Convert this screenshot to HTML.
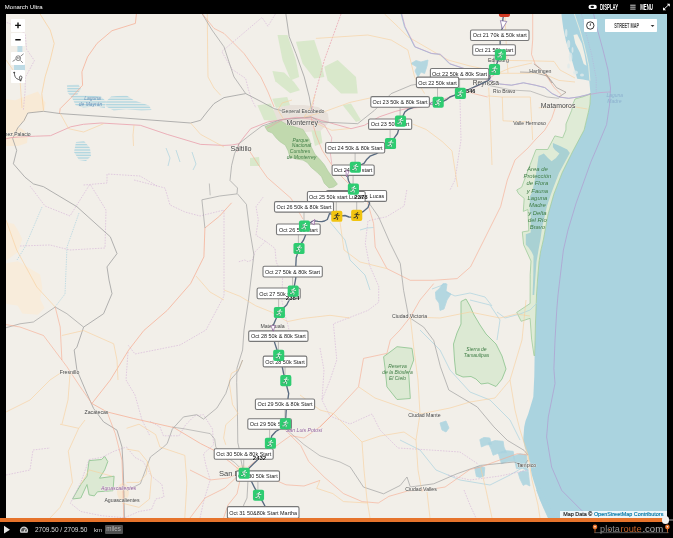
<!DOCTYPE html>
<html><head><meta charset="utf-8"><title>Monarch Ultra</title>
<style>
html,body{margin:0;padding:0;background:#000;}
body{width:673px;height:538px;overflow:hidden;position:relative;font-family:"Liberation Sans",sans-serif;}
#wrap{position:absolute;left:0;top:0;width:673px;height:538px;will-change:transform;}
#title{position:absolute;left:4.8px;top:3.4px;font-size:6px;line-height:8px;color:#fff;white-space:nowrap;}
#map{position:absolute;left:5.7px;top:14.1px;width:661.4px;height:503.5px;background:#f2efe9;overflow:hidden;}
#map svg{position:absolute;left:-5.7px;top:-14.1px;font-family:"Liberation Sans",sans-serif;}
.lb{position:absolute;box-sizing:border-box;background:#fff;border:.8px solid #6e6e6e;border-radius:1.6px;font-size:5.45px;color:#222;white-space:nowrap;text-align:center;box-shadow:0 0 .8px rgba(0,0,0,.4);overflow:hidden;}
.lt{font-size:5.47px;fill:#1a1a1a;}
.btn{position:absolute;background:#fff;box-sizing:border-box;border-radius:.8px;}
#attr{position:absolute;left:554.4px;top:496.8px;width:107px;height:6.7px;background:rgba(255,255,255,.8);font-size:5.45px;line-height:6.9px;color:#222;text-align:left;padding-left:3.2px;box-sizing:border-box;white-space:nowrap;}
#attr{-webkit-text-stroke:.15px #222;}
#attr b{font-weight:normal;color:#0078a8;-webkit-text-stroke:.15px #0078a8;}
#bar{position:absolute;left:0;top:517.9px;width:664px;height:4.1px;background:#e6732b;}
#bar2{position:absolute;left:664px;top:518.9px;width:9px;height:2.2px;background:#555;}
#knob{position:absolute;left:661.6px;top:516.1px;width:7.6px;height:7.6px;border-radius:50%;background:#f2f2f2;}
#bot{position:absolute;left:0;top:521px;width:673px;height:17px;color:#dcdcdc;font-size:6.5px;}
#bot span{position:absolute;white-space:nowrap;}
</style></head><body>
<div id="wrap">
<div id="title">Monarch Ultra</div>
<svg style="position:absolute;left:0;top:0" width="673" height="14" viewBox="0 0 673 14">
<rect x="588.5" y="4.7" width="8.3" height="4.4" rx="2.2" fill="#fff"/><ellipse cx="592.3" cy="6.9" rx="1.8" ry="1.05" fill="#111"/>
<g fill="#d0d0d0"><rect x="630.2" y="4.7" width="5.4" height="1"/><rect x="630.2" y="6.65" width="5.4" height="1"/><rect x="630.2" y="8.6" width="5.4" height="1"/></g>
<g stroke="#fff" stroke-width=".9" fill="#fff"><path d="M663.8 9.4 L669 4.4" fill="none"/><path d="M666.8 3.8 L669.8 3.8 L669.8 6.8 Z" stroke="none"/><path d="M663 7.2 L663 10.2 L666 10.2 Z" stroke="none"/></g>
<text x="600" y="9.6" font-family="Liberation Sans, sans-serif" font-size="8.2" font-weight="bold" fill="#fff" textLength="18" lengthAdjust="spacingAndGlyphs">DISPLAY</text>
<text x="640.2" y="9.6" font-family="Liberation Sans, sans-serif" font-size="8.2" font-weight="bold" fill="#fff" textLength="12.8" lengthAdjust="spacingAndGlyphs">MENU</text>
</svg>
<div id="map">
<svg width="673" height="538" viewBox="0 0 673 538">
<rect x="0" y="0" width="673" height="538" fill="#f2efe9"/>
<ellipse cx="242" cy="472" rx="7" ry="7" fill="#f8e4c8" opacity=".75"/>
<ellipse cx="123" cy="492" rx="6" ry="9" fill="#f8e4c8" opacity=".75"/>
<ellipse cx="528" cy="455" rx="4" ry="7" fill="#f8e4c8" opacity=".75"/>
<polygon points="268,118 275,110 288,106 304,106 318,108 327,114 328,122 320,130 306,131 296,127 284,123 272,124" fill="#e8e1da" stroke="#e8e1da" stroke-width="2" stroke-linejoin="round"/>
<polygon points="5,99 15.2,100.3 27.8,95.3 37.9,91.5 45.5,102.8 44.2,111.7 27.8,113 25.3,120.5 17.7,126.8 22,129 28,134 27,143 18,146 5,146" fill="#f8ead6"/>
<polygon points="5,263.4 17.8,261.2 29,267.9 40.1,274.6 42.4,288 40.1,299.1 44.6,308 37.9,314.7 22.3,313.6 17.8,305.8 5,303.6" fill="#f8ecdb"/>
<polygon points="5,222 14,224 17.8,230 22.3,238.9 17.8,252.3 5,261.2" fill="#f8ecdb"/>
<polygon points="272.4,70.9 284.2,72.4 294,82 300,90.2 290.2,93.2 281,86 275.3,81.3" fill="#d9e8cb"/>
<polygon points="272.3,98.7 287.2,97 290,105 276,108" fill="#d9e8cb"/>
<polygon points="311.3,130.3 320.6,131 322.5,143 315,146" fill="#d9e8cb"/>
<polygon points="250,158 259,157 260,166 250,166" fill="#d9e8cb"/>
<polygon points="277.5,35 287.5,35 295.9,60 299.2,76.9 290.9,80.2 282.5,60" fill="#d9e8cb"/>
<polygon points="295.9,41.8 314.3,40 321,60 324.3,76.9 314.3,78.5 302.6,63.5" fill="#d9e8cb"/>
<polygon points="324.3,66.8 337.7,60 356,76.9 357.7,93.6 341,93.6 327.6,80.2" fill="#d9e8cb"/>
<polygon points="342.7,105.3 351,103.6 361,120.3 356,122" fill="#d9e8cb"/>
<polygon points="257.4,105.3 270.8,103.6 277.5,120.3 264.1,120.3" fill="#d9e8cb"/>
<polygon points="561.4,14 562.4,22 563.3,28.6 566,41.6 569.8,52.8 573.5,65.8 577.2,78.8 583,79.6 589.3,80.7 590.4,93 590,104 588.4,112 584.1,130 579,138 572.4,152 566,164 562,173 557,186 553.9,194 550,206 547.9,215 545,228 543.5,239 541.5,248 540.5,252 539,262 537.5,280 536.5,295 536,309 535.4,325 535.1,340 534.6,356 534.4,370 534.3,376 533.3,397 530,408 528.2,414 525.5,421 524.2,427 523.2,440 525,448 528.2,455 530,464 531.6,474 534,482 536.6,490 540,500 543.3,507 548.3,518 667,518 667,14" fill="#aad3df"/>
<polyline points="574.4,14 577.4,23 580,30.5 583.7,43.5 586.4,55 588.7,65.8 589.9,80.7" fill="none" stroke="#e6ecdf" stroke-width=".9"/>
<polygon points="573.5,35 577.2,34.2 581.9,43.5 584.7,54.7 586.5,65.8 583.7,64 580,52.8 575.3,43.5" fill="#f0efe6"/>
<ellipse cx="568.6" cy="44" rx="1.6" ry="4" fill="#dfeaea" opacity=".8"/>
<ellipse cx="570.6" cy="57" rx="1.8" ry="4.5" fill="#dfeaea" opacity=".8"/>
<ellipse cx="568.6" cy="66" rx="1.4" ry="2.6" fill="#dfeaea" opacity=".8"/>
<ellipse cx="575.5" cy="72.5" rx="2.4" ry="2" fill="#dfeaea" opacity=".8"/>
<ellipse cx="582" cy="75" rx="2" ry="1.6" fill="#dfeaea" opacity=".8"/>
<ellipse cx="566.2" cy="33" rx="1.2" ry="4" fill="#dfeaea" opacity=".8"/>
<ellipse cx="572.5" cy="50" rx="1" ry="3" fill="#dfeaea" opacity=".8"/>
<polyline points="581.5,14 585.1,30 591.6,54.2 596.2,78.3 596.2,92.3" fill="none" stroke="#b9a8d6" stroke-width=".5" stroke-dasharray="1.2 1.2"/>
<rect x="17.4" y="44" width="5" height="9" fill="#bedbe5"/><rect x="14" y="62" width="11" height="10" fill="#bedbe5"/>
<polygon points="590.4,94 583,96.8 575,99 573,104 571.7,110.3 566,124 565.9,130 562.7,137.8 554.9,135.9 547.7,149.5 536,149.5 529.5,166.4 524,181 521.7,187.2 516.7,190 518.6,193.7 524.2,198.4 523.3,211.4 527.9,209.5 528.8,230.9 522.3,231.9 523.6,244.7 531,261 530.2,274.4 530.1,303.5 516.7,312.4 521.2,321.3 530.1,318.3 531.6,339.1 534,355.4 534.6,356 535.1,340 535.4,325 536,309 536.5,295 537.5,280 539,262 540.5,252 543.5,239 547.9,215 553.9,194 562,173 572.4,152 584.1,130 588.4,112 590,104 590.5,93" fill="#dfebd6" stroke="#9fcc9c" stroke-width=".8" stroke-linejoin="round"/>
<polygon points="552.9,143 560,146 567.2,149.5 569.8,153 565.5,161 559,173 554,186 551,194 547,206 545,215 542,228 540.5,239 538.5,250 536.5,262 535.2,280 534.2,295 532.6,295 533.3,275 533.5,256 531.7,252.1 528.8,247.7 525.8,244.7 525.8,234.3 530.7,232.6 530.7,215 529.8,211 529.8,196.5 532.1,192.4 536,174.2 538.6,156 543.8,153.4 548,158 551.6,161.2 556,158 559.4,153.4 555,150 552.9,146.9" fill="#a9d1d3"/>
<polygon points="264.9,126.6 274.2,122.9 280.7,121 287.2,124.7 296.5,127.5 303,129.4 305.8,134 309.5,139.6 311.3,147 315.1,154.5 318.8,158.2 324.3,164.7 328.1,171.2 332.7,177.7 337.4,184.2 333.6,187 329,187.9 324.3,183.3 321.6,176.8 316.9,172.1 311.3,167.5 307.6,162.8 303,160.1 296.5,159.1 290,157.3 288.1,150.8 285.3,145.2 279.7,141.5 276,137.8 272.3,133.1 267.7,131.2" fill="#c1d9ae" stroke="#a9c99a" stroke-width=".6" stroke-linejoin="round"/>
<polygon points="461,301.5 466,299 470,306 473.5,314 480,325 486,334 496,344 502,356 506,369 502,379 496,386.5 488,383 481,384 476,379 471,376.5 463,377 456,374 454.5,360 453.5,344 457,333 461,324" fill="#dce9d3" stroke="#9ccb9c" stroke-width="1" stroke-linejoin="round"/>
<polygon points="383.6,356.7 390,352 397,346.7 412,348.4 413.7,360 408.7,373.4 410.3,398.5 397,399.5 386.9,386.8 385.3,370" fill="#dce9d3" stroke="#9ccb9c" stroke-width="1" stroke-linejoin="round"/>
<polygon points="72.5,499 80.8,484.5 87,476.2 89.1,460.6 101.6,459.5 104.7,456.4 107.8,461.6 104.7,469.9 99.5,478.2 114.1,476.2 113,490.7 97.4,491.8 94.3,495.9 89.1,494.9 87,484.5 80.8,498" fill="#dce9d3" stroke="#9ccb9c" stroke-width="1" stroke-linejoin="round"/>
<polygon points="411,63.5 416,60.5 421,62 428,60 427,66 424.6,73.5 421,72 418,76.9 415,71 417,67" fill="#aad3df" stroke="#aad3df" stroke-width=".8" stroke-linejoin="round" opacity=".85"/>
<polygon points="435.4,292 439,289 443,283.6 447,284 446,291 451,294 447,300 444,309 440,310.4 439,303 436,299" fill="#aad3df" stroke="#aad3df" stroke-width=".8" stroke-linejoin="round" opacity=".85"/>
<polygon points="440,423 446,421 449,428 446,432 442,430" fill="#aad3df" stroke="#aad3df" stroke-width=".8" stroke-linejoin="round" opacity=".85"/>
<polygon points="479.8,439.6 484,437.4 489.8,438 491.5,444.3 486,445 481.4,447" fill="#aad3df" stroke="#aad3df" stroke-width=".8" stroke-linejoin="round" opacity=".85"/>
<polygon points="488.1,443 495,440.6 503.2,441.3 504,447 506.5,452.7 499,453 493.1,455.3 491,449" fill="#aad3df" stroke="#aad3df" stroke-width=".8" stroke-linejoin="round" opacity=".85"/>
<polygon points="498.2,453 505,450.6 513.2,451.3 514.9,461 508,461.4 501.5,463.7" fill="#aad3df" stroke="#aad3df" stroke-width=".8" stroke-linejoin="round" opacity=".85"/>
<polygon points="513.2,456.3 520,453.8 526.6,454.7 527,463 528.2,471 522,468 516.5,468.7 515,462" fill="#aad3df" stroke="#aad3df" stroke-width=".8" stroke-linejoin="round" opacity=".85"/>
<polygon points="474.7,468 479,466.2 484.8,467.4 484.1,476 480,477.4 476.4,476.4" fill="#aad3df" stroke="#aad3df" stroke-width=".8" stroke-linejoin="round" opacity=".85"/>
<polygon points="518.2,473 523,471 528.2,471.4 529.9,486 526,484 523.2,485.4 520,479" fill="#aad3df" stroke="#aad3df" stroke-width=".8" stroke-linejoin="round" opacity=".85"/>
<polygon points="536.6,490 540,488 546,500 552,512 556,518 548.3,518 543.3,507" fill="#aad3df" stroke="#aad3df" stroke-width=".8" stroke-linejoin="round" opacity=".85"/>
<defs><pattern id="hz" width="4" height="1.6" patternUnits="userSpaceOnUse"><rect width="4" height=".8" fill="#aad3df"/></pattern></defs>
<polygon points="66.9,85.2 78.3,83.9 80.8,88.9 77,95.3 85.9,95.3 101,96.5 106.1,101.6 104.8,107.9 96,106.6 83.4,107.4 75.8,105.4 72,97.8 67.7,92.7" fill="url(#hz)"/>
<polygon points="111.1,96.5 126.3,95.3 133.9,100.3 149,105.4 151.6,110 141.5,110.4 126.3,109.2 113.7,110.4 106.1,106.6 106.1,101.6" fill="url(#hz)"/>
<polygon points="76,142 84,141 90,148 91,156 86,161 79,160 74,152" fill="url(#hz)"/>
<polyline points="540,300 530,310 520,314 505,318 497,312" fill="none" stroke="#aad3df" stroke-width=".7"/>
<polyline points="330,222 345,240 350,260 365,275 370,290" fill="none" stroke="#aad3df" stroke-width=".7"/>
<polyline points="360,230 367,228 373.4,227.5" fill="none" stroke="#aad3df" stroke-width=".7"/>
<polyline points="432,289 440,286 446,283.6" fill="none" stroke="#aad3df" stroke-width=".7"/>
<polyline points="446,292 455,296 470,293 485,297 492,306" fill="none" stroke="#aad3df" stroke-width=".7"/>
<polyline points="470,300 490,305 500,320 497,340" fill="none" stroke="#aad3df" stroke-width=".7"/>
<polyline points="420,330 440,350 450,370 470,392 490,400 510,420 520,440" fill="none" stroke="#aad3df" stroke-width=".7"/>
<polyline points="400,440 420,450 436,470 460,480 490,485 510,475 522,468" fill="none" stroke="#aad3df" stroke-width=".7"/>
<polyline points="166,148 170,158 168,166" fill="none" stroke="#aad3df" stroke-width=".7"/>
<polyline points="176,150 180,162" fill="none" stroke="#aad3df" stroke-width=".7"/>
<polyline points="192,152 196,164 193,170" fill="none" stroke="#aad3df" stroke-width=".7"/>
<polyline points="42,207 25,247 17,260" fill="none" stroke="#aad3df" stroke-width=".7" stroke-dasharray="1.4 1"/>
<polyline points="79,213 67,247 65,294 55,307" fill="none" stroke="#aad3df" stroke-width=".7" stroke-dasharray="1.4 1"/>
<polyline points="89.1,459.5 101.6,457.4 114.1,451.2 126.6,447 134.9,457.4 143.2,461.6 151.5,476.2 161.9,484.5 164,497 155.7,499 151.5,509.4 139,511.5 124.5,517.8 101.6,515.7 80.8,511.5 70.4,503.2 80.8,482.4 89.1,459.5" fill="none" stroke="#d3b0d6" stroke-width=".6" stroke-dasharray="1.6 1.2"/>
<polyline points="275.3,14.2 267.9,26.3 262,17.4 221.8,51.6 232.2,69.4 245.6,78.4 248.6,90.2 252,100 256,108" fill="none" stroke="#d3b0d6" stroke-width=".6" stroke-dasharray="1.6 1.2"/>
<polyline points="6.8,22.5 10.4,23.9 20,30 25.2,33.8 26.6,49.3 34.4,60.6 25.2,77.6 25.2,90 23.4,110" fill="none" stroke="#d3b0d6" stroke-width=".6" stroke-dasharray="1.6 1.2"/>
<polyline points="83.6,185 107,183 107,174 140,176 157,186" fill="none" stroke="#d3b0d6" stroke-width=".6" stroke-dasharray="1.6 1.2"/>
<polyline points="30,186 45,206 70,216 90,184" fill="none" stroke="#d3b0d6" stroke-width=".6" stroke-dasharray="1.6 1.2"/>
<polyline points="20,246 50,245 70,250 105,248 106,210 90,184" fill="none" stroke="#d3b0d6" stroke-width=".6" stroke-dasharray="1.6 1.2"/>
<polyline points="134,180 165,188 170,205 185,212 200,216 224,210 224,296 206,330 180,345 135,354 128,345" fill="none" stroke="#d3b0d6" stroke-width=".6" stroke-dasharray="1.6 1.2"/>
<polyline points="128,352 126,380 135,395 142,420 150,436" fill="none" stroke="#d3b0d6" stroke-width=".6" stroke-dasharray="1.6 1.2"/>
<polyline points="6,475 30,470 33,450 50,448" fill="none" stroke="#d3b0d6" stroke-width=".6" stroke-dasharray="1.6 1.2"/>
<polyline points="150,421.3 160,427 163.4,435.8 179,435.8 185.7,424.7 194.6,415.8 203.5,414.7 212.5,429.1 213.6,444.8 203.5,453.7 205.8,464.8 210.2,480 204,500 200,518" fill="none" stroke="#d3b0d6" stroke-width=".6" stroke-dasharray="1.6 1.2"/>
<polyline points="406.8,190 404.1,206 386.7,216.7 368,220.8 365.3,243.5 369.4,264.9 378.7,286.3 378.7,302.3 368,310.4 333.4,323.8 336.8,360 330,380 322,400" fill="none" stroke="#d3b0d6" stroke-width=".6" stroke-dasharray="1.6 1.2"/>
<polyline points="263.1,197.2 256,206.7 258.3,219.8 256,235.3 265.5,241.2 275,248.4 276.2,262 280,270 282.6,277 281.8,300 285,315 287.4,323 289,330" fill="none" stroke="#d3b0d6" stroke-width=".6" stroke-dasharray="1.6 1.2"/>
<polyline points="265.5,241.2 254.8,252 252.4,260 247.9,261.6 244.7,260 238,262" fill="none" stroke="#d3b0d6" stroke-width=".6" stroke-dasharray="1.6 1.2"/>
<polyline points="320,348 324,370 322,400 330,416 350,424 372,414 380,430 398,448 430,450 460,452 478,464" fill="none" stroke="#d3b0d6" stroke-width=".6" stroke-dasharray="1.6 1.2"/>
<polyline points="448,475 470,480 500,476 528,470" fill="none" stroke="#d3b0d6" stroke-width=".6" stroke-dasharray="1.6 1.2"/>
<polyline points="464,490 470,505 476,518" fill="none" stroke="#d3b0d6" stroke-width=".6" stroke-dasharray="1.6 1.2"/>
<polyline points="460,100 461,140 455,180 450,190" fill="none" stroke="#d3b0d6" stroke-width=".6" stroke-dasharray="1.6 1.2"/>
<polyline points="593.6,14 597,28 603,50 608,70 610.5,88 609.5,105 606.6,124.5 596,150 591,161.6 576.1,203.2 568,230 563.4,250 559.8,279.8 558,295 556.8,309.4 555,340 553.9,368.8 555,383.5 548.3,416.9 546.6,437 551.6,467 561.7,490.4 581.7,510.5 590,518" fill="none" stroke="#b09bd0" stroke-width=".7"/>
<polyline points="136.4,14 135.4,23.4 112,30.7 97,43.4 87.6,56.8 81.9,71.9 82.6,85.2 71.9,96.9 60.2,108.6 59.5,113.6" fill="none" stroke="#f7a98e" stroke-width="0.7" stroke-linejoin="round"/>
<polyline points="40.1,14 50.2,30 54.2,43.4 50.2,60.2 45.1,76.9 41.8,93.6 43.5,110.3" fill="none" stroke="#f9cf9a" stroke-width="0.7" stroke-linejoin="round"/>
<polyline points="12.7,138.7 15.2,133 17.7,128 24,120.5 27.8,113 43.5,111.3 60.2,113.6 110.3,117 190.6,123 200.6,120.3 207,112 214,103.6 224,97.6 245.7,93.6 260,101 274.1,108.6 290,113" fill="none" stroke="#a0a0a0" stroke-width="0.8" stroke-linejoin="round"/>
<polyline points="5,139 12,137.5 20.2,136.9 35.4,136.2 50.5,135.7 60,131.5 70.7,126.8 83.4,124.3 101,123 140.4,125.3 167.2,134.4 200.6,144.4 224,145.4 232,145 239,143.7" fill="none" stroke="#ea9fac" stroke-width="0.8" stroke-linejoin="round"/>
<polyline points="60.2,113.6 68.6,128.7 83.6,132 103.6,123.7" fill="none" stroke="#f9cf9a" stroke-width="0.6" stroke-linejoin="round"/>
<polyline points="190.6,123 200.6,134.4 224,147" fill="none" stroke="#f9cf9a" stroke-width="0.6" stroke-linejoin="round"/>
<polyline points="207.3,14 207.6,50 208,76.9 214,88 220.7,95.3" fill="none" stroke="#f9cf9a" stroke-width="0.6" stroke-linejoin="round"/>
<polyline points="202.3,14 212,30 224,46.8 229,62 234,76.9 245.7,93.6" fill="none" stroke="#a0a0a0" stroke-width="0.7" stroke-linejoin="round"/>
<polyline points="202.5,14 214,28.4 224,33.4 244,53.5 260.8,76.9 268,92 274.1,107" fill="none" stroke="#f7a98e" stroke-width="0.6" stroke-linejoin="round"/>
<polyline points="12.7,138.7 16.7,150.4 13.4,163.8 25,177.2 33.4,183.9 43.5,186.7 76.9,206.7 110.3,236.8 117,253.6 107,266.9 109,280 112,293.7 103.6,313.7 83.6,327.1 76.9,347.2 74.2,350 76.9,370 86.9,393.5 93.6,408.5 103.6,421.9 117,430.2 122,447 123,465 123.7,483.7 124.4,518" fill="none" stroke="#a0a0a0" stroke-width="0.8" stroke-linejoin="round"/>
<polyline points="134,125 133,135 133.5,146" fill="none" stroke="#f9cf9a" stroke-width="0.6" stroke-linejoin="round"/>
<polyline points="285.9,14 289.2,36.7 295.9,53.5 304.2,76.9 309.3,96.9 311.6,110.3" fill="none" stroke="#a0a0a0" stroke-width="0.8" stroke-linejoin="round"/>
<polyline points="341,14 324.3,60.2 314.3,96.9 311.6,113.6" fill="none" stroke="#ea9fac" stroke-width="0.7" stroke-linejoin="round" stroke-dasharray="2 1"/>
<polyline points="311,117 287.5,118.7 267.5,122 250.7,128.7 244,137 239,143.7 237,152" fill="none" stroke="#ea9fac" stroke-width="0.8" stroke-linejoin="round"/>
<polyline points="311,117 321,120.3 351,128.7 364.4,125.3 379.4,116.8 395.4,111.4 406.1,108.7 420.8,107.3 438,101.5 460,93 480,85 494,75" fill="none" stroke="#ea9fac" stroke-width="0.8" stroke-linejoin="round"/>
<polyline points="412.8,124.1 426.2,129.5 442.2,141.5 452,150.9 457.7,187" fill="none" stroke="#f9cf9a" stroke-width="0.6" stroke-linejoin="round"/>
<polyline points="311,117 321,122 357.7,123.7 374.5,110.3 391.2,93.6 411.2,85.2 431.3,81.9 450,80 470,78 490,74" fill="none" stroke="#a0a0a0" stroke-width="0.7" stroke-linejoin="round"/>
<polyline points="315.9,38.4 367.8,35 391.2,40 407.9,50 414.6,76.9 424.6,93.6" fill="none" stroke="#f9cf9a" stroke-width="0.6" stroke-linejoin="round"/>
<polyline points="384.5,14 397.9,26.7 407.9,36.7 448,60 470,66 490,70" fill="none" stroke="#f9cf9a" stroke-width="0.6" stroke-linejoin="round"/>
<polyline points="401.2,14 404.5,26.7 409.6,36.7 414.6,46.8 431.3,53.5 440,54.3 449.5,63.8 463.8,68.5 487.6,79.2 499.4,84 511.3,85.2 523.2,82.8 535.1,85.2 544.6,87.6 551.7,93.5 558.9,97 568.4,98.3 577.9,97 587.4,94.7 590.4,93.5" fill="none" stroke="#9cc7d8" stroke-width="0.9" stroke-linejoin="round"/>
<polyline points="401.8,14 405.1,26.7 410.2,36.7 415.2,46.8 431.9,53.5 440.6,54.3 450.1,63.8 464.4,68.5 488.2,79.2 500,84 511.9,85.2 523.8,82.8 535.7,85.2 545.2,87.6 552.3,93.5 559.5,97 569,98.3 578.5,97 588,94.7 600,92.6 610.7,91.9" fill="none" stroke="#c79fcc" stroke-width="0.7" stroke-linejoin="round"/>
<polyline points="311,117 316,135 322,150 335,170 350,185 366.9,200" fill="none" stroke="#f7a98e" stroke-width="0.6" stroke-linejoin="round"/>
<polyline points="239,143.7 250,135 262,126 280,120 311,117" fill="none" stroke="#a0a0a0" stroke-width="0.7" stroke-linejoin="round"/>
<polyline points="303.9,117.3 311.3,106.2 315,95" fill="none" stroke="#f9cf9a" stroke-width="0.6" stroke-linejoin="round"/>
<polyline points="303.9,117.3 324.3,111.7 350,102.4 370,98" fill="none" stroke="#f9cf9a" stroke-width="0.6" stroke-linejoin="round"/>
<polyline points="311.3,121 331.8,130.3 350,128.5" fill="none" stroke="#f9cf9a" stroke-width="0.6" stroke-linejoin="round"/>
<polyline points="266.7,128.5 283.5,119.2 296.5,117.3 311.3,119.2 324.3,124.7 331.8,137.8 330,150.8 331.8,163.8" fill="none" stroke="#ea9fac" stroke-width="0.6" stroke-linejoin="round"/>
<polyline points="283.5,119.2 278,110 282,103 292,100" fill="none" stroke="#f9cf9a" stroke-width="0.6" stroke-linejoin="round"/>
<polyline points="487.6,60.2 520,60.6 554,61.4" fill="none" stroke="#f9cf9a" stroke-width="0.6" stroke-linejoin="round"/>
<polyline points="495.9,73.3 542.2,73.3 558.9,80.4 575,82" fill="none" stroke="#f9cf9a" stroke-width="0.6" stroke-linejoin="round"/>
<polyline points="532.7,14 532.7,40 531.5,54.3 535.1,63.8 544.6,73.3 554.1,87.6 561.3,94.7" fill="none" stroke="#f7a98e" stroke-width="0.6" stroke-linejoin="round"/>
<polyline points="533.9,63.8 544.6,72.1 556.5,87.6 566,92.3 558.9,97" fill="none" stroke="#8f8580" stroke-width="0.6" stroke-linejoin="round"/>
<polyline points="520,72 533.9,72.5 547,76 552,83" fill="none" stroke="#8f8580" stroke-width="0.6" stroke-linejoin="round"/>
<polyline points="487.6,85.2 511.3,90 530.3,91.1 547,97 558.9,98.3" fill="none" stroke="#a0a0a0" stroke-width="0.6" stroke-linejoin="round"/>
<polyline points="488.7,87.6 490,111.3 491.1,140 492,165" fill="none" stroke="#f9cf9a" stroke-width="0.6" stroke-linejoin="round"/>
<polyline points="487.6,95.9 501.8,97 530.3,97 531.5,118.5 532.7,140" fill="none" stroke="#f9cf9a" stroke-width="0.6" stroke-linejoin="round"/>
<polyline points="502.3,97 503,120.8 530.3,122" fill="none" stroke="#f9cf9a" stroke-width="0.6" stroke-linejoin="round"/>
<polyline points="538.7,107.8 573.1,106.6 587.4,109" fill="none" stroke="#f9cf9a" stroke-width="0.6" stroke-linejoin="round"/>
<polyline points="556.5,104.2 551.7,118.5 544.6,130.3 535.1,140 528,148" fill="none" stroke="#f7a98e" stroke-width="0.6" stroke-linejoin="round"/>
<polyline points="454.3,87.6 473.3,93.5 487.6,97" fill="none" stroke="#f7a98e" stroke-width="0.6" stroke-linejoin="round"/>
<polyline points="494,75 510,68 532,63" fill="none" stroke="#f9cf9a" stroke-width="0.6" stroke-linejoin="round"/>
<polyline points="505,14 506,40 507,60 508,73" fill="none" stroke="#f9cf9a" stroke-width="0.6" stroke-linejoin="round"/>
<polyline points="554,61.4 560,70 575,78" fill="none" stroke="#f9cf9a" stroke-width="0.6" stroke-linejoin="round"/>
<polyline points="528,148 515,160 507.3,180 500.6,206.7 483.9,240.2 470.5,266.9 457.1,278.6 433.7,280.3 410.3,280.3 386.9,268.6 375.2,246.9 373.6,223.5 366.9,200" fill="none" stroke="#f7a98e" stroke-width="0.6" stroke-linejoin="round"/>
<polyline points="231.6,202.8 219.7,216 204.9,228 203.9,256.9 190.6,283.6 167.2,310.4 143.8,330.5 128.7,350 110.3,380 91.9,403.5" fill="none" stroke="#f7a98e" stroke-width="0.7" stroke-linejoin="round"/>
<polyline points="239,143.7 234.5,153.8 231.6,165.6 230,180.5 237.5,188 237,193.9 219.7,196 201.9,199.8 204.9,228" fill="none" stroke="#a0a0a0" stroke-width="0.7" stroke-linejoin="round"/>
<polyline points="209.3,183.5 210.2,195.3" fill="none" stroke="#a0a0a0" stroke-width="0.6" stroke-linejoin="round"/>
<polyline points="237.5,193.9 246.4,204.3 249.4,228 253.9,254.7 250.9,280 248.5,300 244,330 242.6,350 237,368 236.7,382.4 237.4,410 237.8,442.6 239,448 241,460 243,470 248,480 247,498 243.7,505 242,518" fill="none" stroke="#a0a0a0" stroke-width="0.7" stroke-linejoin="round"/>
<polyline points="249.4,150.8 258.9,165.6 267.2,177.5 279.1,187.9 291,198.3 302.9,219" fill="none" stroke="#f7a98e" stroke-width="0.6" stroke-linejoin="round"/>
<polyline points="172.3,427 185.7,429.1 210.2,433.6 214.7,439.2 215.8,447 221.4,453.7 234.7,462.5 239.2,467" fill="none" stroke="#a0a0a0" stroke-width="0.6" stroke-linejoin="round"/>
<polyline points="242.6,360 239.2,369 231.4,373.4 229.2,382.3 232.5,404.6 238.1,413.5 225.8,424.7 223.6,438 225.8,444.8" fill="none" stroke="#f9cf9a" stroke-width="0.6" stroke-linejoin="round"/>
<polyline points="286,429 304,444.6 320,455.8 340,462 350.2,467" fill="none" stroke="#a0a0a0" stroke-width="0.6" stroke-linejoin="round"/>
<polyline points="248,467 259.3,458 290.5,435.7 304,438 320,426.8 333.4,413.6" fill="none" stroke="#f7a98e" stroke-width="0.6" stroke-linejoin="round"/>
<polyline points="245.9,473.7 270.4,478 286,484.8 304,486 320,480.4" fill="none" stroke="#f7a98e" stroke-width="0.6" stroke-linejoin="round"/>
<polyline points="241.4,473.7 237,493.8 228,505 223.6,518" fill="none" stroke="#f7a98e" stroke-width="0.6" stroke-linejoin="round"/>
<polyline points="5,328 20,323.8 33.4,322 55.2,307 66.9,313.7 83.6,327.1" fill="none" stroke="#a0a0a0" stroke-width="0.7" stroke-linejoin="round"/>
<polyline points="5,324.4 20,327 43.5,335.5 61.9,360 66.9,366.7 80.2,386.8 91.9,403.5" fill="none" stroke="#f7a98e" stroke-width="0.6" stroke-linejoin="round"/>
<polyline points="55.2,307 60.2,327 61.9,360" fill="none" stroke="#f7a98e" stroke-width="0.6" stroke-linejoin="round"/>
<polyline points="6,220 16.7,250 36.8,287 55.2,307" fill="none" stroke="#f9cf9a" stroke-width="0.6" stroke-linejoin="round"/>
<polyline points="61.9,335.5 83.6,330.5 113.7,343.8 117,360 118,380" fill="none" stroke="#f9cf9a" stroke-width="0.6" stroke-linejoin="round"/>
<polyline points="224,300 210,292 196,276" fill="none" stroke="#f9cf9a" stroke-width="0.6" stroke-linejoin="round"/>
<polyline points="224,290 240,296.3 255.8,305.8 271.6,312.1 287.4,321.6 303.2,318.4 330,315.3 350,318" fill="none" stroke="#f9cf9a" stroke-width="0.6" stroke-linejoin="round"/>
<polyline points="91.9,403.5 107,411.9 133.7,418.5 173.9,427.6 200.6,443.6 214,450.3 230,462 242,472" fill="none" stroke="#f7a98e" stroke-width="0.7" stroke-linejoin="round"/>
<polyline points="107,411.9 115.3,433.6 122,460.3 123,490 123.7,518" fill="none" stroke="#f7a98e" stroke-width="0.6" stroke-linejoin="round"/>
<polyline points="242.6,360 238.1,371.2 230.3,380 225.8,393.5 216.9,408 203.5,419.1 196.8,414.7 183.5,416.9 172.3,429.2 167.2,443.6 163.4,447 150.4,457 140.4,483.7 127,490.4" fill="none" stroke="#a0a0a0" stroke-width="0.7" stroke-linejoin="round"/>
<polyline points="6,412 30,400 50,380 62,372" fill="none" stroke="#f9cf9a" stroke-width="0.6" stroke-linejoin="round"/>
<polyline points="242,472 225,488 205,498 190,518" fill="none" stroke="#f7a98e" stroke-width="0.6" stroke-linejoin="round"/>
<polyline points="242,472 228,478 210,480 190,470" fill="none" stroke="#f7a98e" stroke-width="0.6" stroke-linejoin="round"/>
<polyline points="126.6,449.1 139,451.2 147.4,461.6 146.3,474.1 139,482.4 126.6,482.4" fill="none" stroke="#f9cf9a" stroke-width="0.6" stroke-linejoin="round"/>
<polyline points="60,424.2 78.7,428.3 85,420" fill="none" stroke="#f9cf9a" stroke-width="0.6" stroke-linejoin="round"/>
<polyline points="78.7,428.3 68.3,451.2 72.5,482.4 60,507.4" fill="none" stroke="#f9cf9a" stroke-width="0.6" stroke-linejoin="round"/>
<polyline points="126.6,428.3 139,424.2 155.7,434.6 159.9,447 184.8,455.4 186.9,482.4 184.8,518" fill="none" stroke="#f9cf9a" stroke-width="0.6" stroke-linejoin="round"/>
<polyline points="147.4,461.6 151.5,476.2 149.5,499 139,507.4 122.4,503.2" fill="none" stroke="#f9cf9a" stroke-width="0.6" stroke-linejoin="round"/>
<polyline points="112,476.2 89.1,469.9 80.8,484.5" fill="none" stroke="#f9cf9a" stroke-width="0.6" stroke-linejoin="round"/>
<polyline points="70,374 68,400 62,424" fill="none" stroke="#f9cf9a" stroke-width="0.6" stroke-linejoin="round"/>
<polyline points="60,507.4 50,518" fill="none" stroke="#f9cf9a" stroke-width="0.6" stroke-linejoin="round"/>
<polyline points="366.9,200 378.6,216.8 390.3,243.5 400.3,263.6 403.6,290.3 408.7,317.1 423.7,327.1 433.7,340.5 440.4,366.7 448.8,390 477.2,406.9 493.9,426.9 507.3,440.3 524,450.3 528,455" fill="none" stroke="#a0a0a0" stroke-width="0.7" stroke-linejoin="round"/>
<polyline points="433.7,283.6 420,300 410.3,317" fill="none" stroke="#f7a98e" stroke-width="0.6" stroke-linejoin="round"/>
<polyline points="410.3,317 400,330 390.3,340 386.9,353.4 363.5,358.4 358.5,386.8 333.4,413.6 320,426.8" fill="none" stroke="#f7a98e" stroke-width="0.6" stroke-linejoin="round"/>
<polyline points="350.2,467 363.5,487.1 383.6,493.8 400.3,485.4 407,477 410.3,487 433.7,483.8 457.1,473.7 480.5,465.4 514,462 524,465.4 528,460" fill="none" stroke="#a0a0a0" stroke-width="0.7" stroke-linejoin="round"/>
<polyline points="285.4,430 290,434.8 300.7,445.5 308.7,461.5 324.8,477.6 343.5,493.6 362.2,501.6 378.3,503 389,496.3 407.7,491 429,489.6 445.1,487 470,469.5 480.5,467 517.3,453.7 528,455" fill="none" stroke="#f7a98e" stroke-width="0.6" stroke-linejoin="round"/>
<polyline points="320,480.4 316.7,488.3 332.8,493.6 343.5,501.6 367.6,503" fill="none" stroke="#f9cf9a" stroke-width="0.6" stroke-linejoin="round"/>
<polyline points="410.3,317 440,318 470,312 500,318 516,314 530,316" fill="none" stroke="#f9cf9a" stroke-width="0.6" stroke-linejoin="round"/>
<polyline points="410.3,317 414,350 418,380 420,414 416,440 418,470 422,492" fill="none" stroke="#f9cf9a" stroke-width="0.6" stroke-linejoin="round"/>
<polyline points="420,414 450,408 470,402 495,398 510,380 522,340 526,300" fill="none" stroke="#f9cf9a" stroke-width="0.6" stroke-linejoin="round"/>
<polyline points="358.5,386.8 375,398 395,405 420,414" fill="none" stroke="#f9cf9a" stroke-width="0.6" stroke-linejoin="round"/>
<polyline points="333.4,413.6 350,430 362,442 380,436 404,432 416,440" fill="none" stroke="#f9cf9a" stroke-width="0.6" stroke-linejoin="round"/>
<polyline points="362,442 364,470 366.9,498.8 370,518" fill="none" stroke="#f9cf9a" stroke-width="0.6" stroke-linejoin="round"/>
<polyline points="300,395 320,410 333.4,413.6" fill="none" stroke="#f9cf9a" stroke-width="0.6" stroke-linejoin="round"/>
<polyline points="528,455 520,430 515,410 510,380" fill="none" stroke="#f9cf9a" stroke-width="0.6" stroke-linejoin="round"/>
<polyline points="528,455 532,480 538,505 540,518" fill="none" stroke="#f9cf9a" stroke-width="0.6" stroke-linejoin="round"/>
<polyline points="480.5,467 486,490 492,518" fill="none" stroke="#f9cf9a" stroke-width="0.6" stroke-linejoin="round"/>
<polyline points="427,492 430,518" fill="none" stroke="#f9cf9a" stroke-width="0.6" stroke-linejoin="round"/>
<polyline points="340,222 344,250 360,262 386.9,268.6" fill="none" stroke="#f9cf9a" stroke-width="0.6" stroke-linejoin="round"/>
<polyline points="6,60 20,80 22,108" fill="none" stroke="#f9cf9a" stroke-width="0.6" stroke-linejoin="round"/>
<text x="302.3" y="125" font-size="7.05" fill="#454545" text-anchor="middle" stroke="#f6f4ef" stroke-width=".7" paint-order="stroke">Monterrey</text>
<text x="241" y="150.6" font-size="7.2" fill="#454545" text-anchor="middle" stroke="#f6f4ef" stroke-width=".7" paint-order="stroke">Saltillo</text>
<text x="558.1" y="107.6" font-size="6.9" fill="#454545" text-anchor="middle" stroke="#f6f4ef" stroke-width=".7" paint-order="stroke">Matamoros</text>
<text x="485.8" y="85.3" font-size="6.6" fill="#454545" text-anchor="middle" stroke="#f6f4ef" stroke-width=".7" paint-order="stroke">Reynosa</text>
<text x="303" y="113.2" font-size="5.2" fill="#454545" text-anchor="middle" stroke="#f6f4ef" stroke-width=".7" paint-order="stroke">General Escobedo</text>
<text x="498.4" y="61.6" font-size="5.2" fill="#454545" text-anchor="middle" stroke="#f6f4ef" stroke-width=".7" paint-order="stroke">Edinburg</text>
<text x="540.4" y="72.9" font-size="5.2" fill="#454545" text-anchor="middle" stroke="#f6f4ef" stroke-width=".7" paint-order="stroke">Harlingen</text>
<text x="504.2" y="92.9" font-size="5" fill="#454545" text-anchor="middle" stroke="#f6f4ef" stroke-width=".7" paint-order="stroke">Río Bravo</text>
<text x="529.5" y="125" font-size="5" fill="#454545" text-anchor="middle" stroke="#f6f4ef" stroke-width=".7" paint-order="stroke">Valle Hermoso</text>
<text x="409.5" y="318" font-size="5.2" fill="#454545" text-anchor="middle" stroke="#f6f4ef" stroke-width=".7" paint-order="stroke">Ciudad Victoria</text>
<text x="424.4" y="417" font-size="5.2" fill="#454545" text-anchor="middle" stroke="#f6f4ef" stroke-width=".7" paint-order="stroke">Ciudad Mante</text>
<text x="421" y="490.6" font-size="5.2" fill="#454545" text-anchor="middle" stroke="#f6f4ef" stroke-width=".7" paint-order="stroke">Ciudad Valles</text>
<text x="526.5" y="467" font-size="5.2" fill="#454545" text-anchor="middle" stroke="#f6f4ef" stroke-width=".7" paint-order="stroke">Tampico</text>
<text x="272.5" y="327.6" font-size="5.2" fill="#454545" text-anchor="middle" stroke="#f6f4ef" stroke-width=".7" paint-order="stroke">Matehuala</text>
<text x="69.5" y="373.6" font-size="5.2" fill="#454545" text-anchor="middle" stroke="#f6f4ef" stroke-width=".7" paint-order="stroke">Fresnillo</text>
<text x="96.5" y="413.8" font-size="5.2" fill="#454545" text-anchor="middle" stroke="#f6f4ef" stroke-width=".7" paint-order="stroke">Zacatecas</text>
<text x="122" y="502" font-size="5.2" fill="#454545" text-anchor="middle" stroke="#f6f4ef" stroke-width=".7" paint-order="stroke">Aguascalientes</text>
<text x="118.6" y="490" font-size="5.2" fill="#8d5a99" text-anchor="middle" stroke="#f6f4ef" stroke-width=".7" paint-order="stroke" font-style="italic">Aguascalientes</text>
<text x="304" y="432.1" font-size="5.2" fill="#8d5a99" text-anchor="middle" stroke="#f6f4ef" stroke-width=".7" paint-order="stroke" font-style="italic">San Luis Potosí</text>
<text x="245.6" y="476.3" font-size="7.6" fill="#454545" text-anchor="middle" stroke="#f6f4ef" stroke-width=".7" paint-order="stroke">San Luis Potosí</text>
<text x="13.6" y="135.6" font-size="5" fill="#454545" text-anchor="middle" stroke="#f6f4ef" stroke-width=".7" paint-order="stroke">Gómez Palacio</text>
<text x="92.5" y="100" font-size="5" fill="#6a94bd" text-anchor="middle" font-style="italic">Laguna</text>
<text x="90.5" y="106.2" font-size="5" fill="#6a94bd" text-anchor="middle" font-style="italic">de Mayrán</text>
<text x="614.8" y="97.2" font-size="5" fill="#8db1cf" text-anchor="middle" font-style="italic">Laguna</text>
<text x="614.4" y="102.8" font-size="5" fill="#8db1cf" text-anchor="middle" font-style="italic">Madre</text>
<text x="300.5" y="141.5" font-size="5" fill="#3f7d45" text-anchor="middle" font-style="italic">Parque</text>
<text x="301.5" y="147.3" font-size="5" fill="#3f7d45" text-anchor="middle" font-style="italic">Nacional</text>
<text x="300" y="153.1" font-size="5" fill="#3f7d45" text-anchor="middle" font-style="italic">Cumbres</text>
<text x="301.5" y="158.9" font-size="5" fill="#3f7d45" text-anchor="middle" font-style="italic">de Monterrey</text>
<text x="537.4" y="170.6" font-size="5.9" fill="#3f7d45" text-anchor="middle" font-style="italic">Área de</text>
<text x="537.4" y="177.9" font-size="5.9" fill="#3f7d45" text-anchor="middle" font-style="italic">Protección</text>
<text x="537.4" y="185.2" font-size="5.9" fill="#3f7d45" text-anchor="middle" font-style="italic">de Flora</text>
<text x="537.4" y="192.6" font-size="5.9" fill="#3f7d45" text-anchor="middle" font-style="italic">y Fauna</text>
<text x="537.4" y="199.9" font-size="5.9" fill="#3f7d45" text-anchor="middle" font-style="italic">Laguna</text>
<text x="537.4" y="207.2" font-size="5.9" fill="#3f7d45" text-anchor="middle" font-style="italic">Madre</text>
<text x="537.4" y="214.5" font-size="5.9" fill="#3f7d45" text-anchor="middle" font-style="italic">y Delta</text>
<text x="537.4" y="221.8" font-size="5.9" fill="#3f7d45" text-anchor="middle" font-style="italic">del Río</text>
<text x="537.4" y="229.2" font-size="5.9" fill="#3f7d45" text-anchor="middle" font-style="italic">Bravo</text>
<text x="476.5" y="350.5" font-size="5" fill="#3f7d45" text-anchor="middle" font-style="italic">Sierra de</text>
<text x="476.5" y="356.6" font-size="5" fill="#3f7d45" text-anchor="middle" font-style="italic">Tamaulipas</text>
<text x="397.5" y="367.5" font-size="5" fill="#3f7d45" text-anchor="middle" font-style="italic">Reserva</text>
<text x="397.5" y="373.6" font-size="5" fill="#3f7d45" text-anchor="middle" font-style="italic">de la Biósfera</text>
<text x="397.5" y="379.7" font-size="5" fill="#3f7d45" text-anchor="middle" font-style="italic">El Cielo</text>
<polyline points="504.2,14 503,18 502.5,23 502.3,28.5 500.8,31 500.2,34 500.2,45 500.4,55.2 497.5,62 494.5,69.5 491,73.5 489.7,75.5 490.1,77.8 488.3,80.5 483.9,82.7 476.7,85.8 469.6,89 466,90.7 460.4,93.4 454.9,95.2 450,97 447,99.3 443,101.4 438.2,102.2 432.9,103 426.9,104.6 420.2,105.6 413.5,107.3 408.1,109.4 404.8,112 402.6,116.7 401,121 399.4,126.8 397.5,133.5 393.5,138.8 390.3,143.6 385.5,148.2 380,151.5 375.9,153.9 370,156.2 366.4,159.8 364,163.4 360.5,165.2 355.5,167 351.5,170 348.8,173.5 347.8,177.5 348.6,181 350.5,184.8 353.4,188.9 357,194 362,197 367.5,199.5 369.6,203 368,207.5 363,211.7 356.7,215.4 352,217.2 349,217 345,215.5 336.8,216.3 331.5,214.2 329.4,213.6 328.7,216.1 327.3,219.5 324.5,221 321.9,221.6 318,221.4 315,220.9 312,221.5 309,223.5 304.2,226.1 305.8,231 305.6,235 303.6,240 300.5,244.5 298.9,248.5 297.5,253.4 296.2,257.8 295.8,265.7 295.8,278 294.6,284.6 293.1,290.9 290.2,298 286.8,304.7 283.5,308 279.5,312.5 276.8,317 273.5,324.8 273,329.2 273.6,336 274.6,342.6 276.8,349.3 278.6,355.2 281.3,362.3 283.6,373.5 285.8,380.6 286.9,386.8 288.7,393.5 288,398.4 286.2,410.3 285.8,417 285.4,423.2 281.3,428.1 275.8,431.5 271.7,436 270.3,443.1 266,451.3 255.9,461.4 249.2,468.1 244.1,473.2 247,478 251.5,481.5 254.8,488.2 258.6,494.9 262.6,501.6 264.9,506 265.5,512" fill="none" stroke="#596b81" stroke-width="1.35" stroke-linejoin="round" stroke-linecap="round"/>
<line x1="499.8" y1="40.7" x2="499.8" y2="54.7" stroke="#999" stroke-width=".6"/>
<line x1="494.1" y1="55.4" x2="494.1" y2="69.4" stroke="#999" stroke-width=".6"/>
<line x1="459.6" y1="79.2" x2="459.6" y2="93.2" stroke="#999" stroke-width=".6"/>
<line x1="437.5" y1="87.8" x2="437.5" y2="101.8" stroke="#999" stroke-width=".6"/>
<line x1="400.1" y1="107.4" x2="400.1" y2="121.4" stroke="#999" stroke-width=".6"/>
<line x1="390.1" y1="129.6" x2="390.1" y2="143.6" stroke="#999" stroke-width=".6"/>
<line x1="355.1" y1="153.2" x2="355.1" y2="167.2" stroke="#999" stroke-width=".6"/>
<line x1="353.1" y1="175.6" x2="353.1" y2="189.6" stroke="#999" stroke-width=".6"/>
<line x1="356.7" y1="201.6" x2="356.7" y2="215.6" stroke="#999" stroke-width=".6"/>
<line x1="336.3" y1="202" x2="336.3" y2="216" stroke="#999" stroke-width=".6"/>
<line x1="304" y1="212.3" x2="304" y2="226.3" stroke="#999" stroke-width=".6"/>
<line x1="298.4" y1="234.9" x2="298.4" y2="248.9" stroke="#999" stroke-width=".6"/>
<line x1="292.6" y1="277.2" x2="292.6" y2="291.2" stroke="#999" stroke-width=".6"/>
<line x1="278.6" y1="298.9" x2="278.6" y2="312.9" stroke="#999" stroke-width=".6"/>
<line x1="278.4" y1="341.6" x2="278.4" y2="355.6" stroke="#999" stroke-width=".6"/>
<line x1="285" y1="367.1" x2="285" y2="381.1" stroke="#999" stroke-width=".6"/>
<line x1="285" y1="409.7" x2="285" y2="423.7" stroke="#999" stroke-width=".6"/>
<line x1="269.6" y1="429.4" x2="269.6" y2="443.4" stroke="#999" stroke-width=".6"/>
<line x1="243.7" y1="459.5" x2="243.7" y2="473.5" stroke="#999" stroke-width=".6"/>
<line x1="257.9" y1="481.5" x2="257.9" y2="495.5" stroke="#999" stroke-width=".6"/>
</svg>
<svg width="673" height="538" viewBox="0 0 673 538">
<g>
<rect x="470.5" y="29.95" width="58.5" height="10.55" rx="1.5" fill="#fff" stroke="#787878" stroke-width="1.1"/>
<text x="499.8" y="37.45" text-anchor="middle" class="lt">Oct 21 70k &amp; 50k start</text>
<rect x="472.7" y="44.75" width="42.7" height="10.45" rx="1.5" fill="#fff" stroke="#787878" stroke-width="1.1"/>
<text x="494.1" y="52.2" text-anchor="middle" class="lt">Oct 21 50k start</text>
<rect x="430.4" y="68.45" width="58.4" height="10.55" rx="1.5" fill="#fff" stroke="#787878" stroke-width="1.1"/>
<text x="459.6" y="75.95" text-anchor="middle" class="lt">Oct 22 50k &amp; 80k Start</text>
<rect x="416.4" y="77.15" width="42.3" height="10.45" rx="1.5" fill="#fff" stroke="#787878" stroke-width="1.1"/>
<text x="437.5" y="84.6" text-anchor="middle" class="lt">Oct 22 50k start</text>
<rect x="370.8" y="96.65" width="58.6" height="10.55" rx="1.5" fill="#fff" stroke="#787878" stroke-width="1.1"/>
<text x="400.1" y="104.15" text-anchor="middle" class="lt">Oct 23 50k &amp; 80k Start</text>
<rect x="368.6" y="118.95" width="43.1" height="10.45" rx="1.5" fill="#fff" stroke="#787878" stroke-width="1.1"/>
<text x="390.1" y="126.4" text-anchor="middle" class="lt">Oct 23 50k start</text>
<rect x="325.6" y="142.55" width="59.1" height="10.45" rx="1.5" fill="#fff" stroke="#787878" stroke-width="1.1"/>
<text x="355.1" y="150" text-anchor="middle" class="lt">Oct 24 50k &amp; 80k Start</text>
<rect x="332.1" y="164.95" width="42.1" height="10.45" rx="1.5" fill="#fff" stroke="#787878" stroke-width="1.1"/>
<text x="353.1" y="172.4" text-anchor="middle" class="lt">Oct 24 50k start</text>
<rect x="326.4" y="190.55" width="60.2" height="10.85" rx="1.5" fill="#fff" stroke="#787878" stroke-width="1.1"/>
<text x="384.2" y="198.2" text-anchor="end" class="lt">Lucas</text>
<rect x="307.4" y="191.45" width="57.8" height="10.35" rx="1.5" fill="#fff" stroke="#787878" stroke-width="1.1"/>
<text x="336.3" y="198.85" text-anchor="middle" class="lt">Oct 25 50k start Lucas</text>
<rect x="274.5" y="201.65" width="59" height="10.45" rx="1.5" fill="#fff" stroke="#787878" stroke-width="1.1"/>
<text x="304" y="209.1" text-anchor="middle" class="lt">Oct 26 50k &amp; 80k Start</text>
<rect x="276.5" y="223.95" width="43.7" height="10.75" rx="1.5" fill="#fff" stroke="#787878" stroke-width="1.1"/>
<text x="298.4" y="231.55" text-anchor="middle" class="lt">Oct 26 50k start</text>
<rect x="263" y="266.25" width="59.3" height="10.75" rx="1.5" fill="#fff" stroke="#787878" stroke-width="1.1"/>
<text x="292.6" y="273.85" text-anchor="middle" class="lt">Oct 27 50k &amp; 80k Start</text>
<rect x="257.1" y="288.05" width="43.1" height="10.65" rx="1.5" fill="#fff" stroke="#787878" stroke-width="1.1"/>
<text x="278.6" y="295.6" text-anchor="middle" class="lt">Oct 27 50k start</text>
<rect x="248.7" y="330.85" width="59.3" height="10.55" rx="1.5" fill="#fff" stroke="#787878" stroke-width="1.1"/>
<text x="278.4" y="338.35" text-anchor="middle" class="lt">Oct 28 50k &amp; 80k Start</text>
<rect x="263.2" y="356.15" width="43.6" height="10.75" rx="1.5" fill="#fff" stroke="#787878" stroke-width="1.1"/>
<text x="285" y="363.75" text-anchor="middle" class="lt">Oct 28 50k Start</text>
<rect x="255.4" y="398.95" width="59.2" height="10.55" rx="1.5" fill="#fff" stroke="#787878" stroke-width="1.1"/>
<text x="285" y="406.45" text-anchor="middle" class="lt">Oct 29 50k &amp; 80k Start</text>
<rect x="247.8" y="418.75" width="43.6" height="10.45" rx="1.5" fill="#fff" stroke="#787878" stroke-width="1.1"/>
<text x="269.6" y="426.2" text-anchor="middle" class="lt">Oct 29 50k Start</text>
<rect x="214.2" y="448.75" width="59" height="10.55" rx="1.5" fill="#fff" stroke="#787878" stroke-width="1.1"/>
<text x="243.7" y="456.25" text-anchor="middle" class="lt">Oct 30 50k &amp; 80k Start</text>
<rect x="236.3" y="470.85" width="43.2" height="10.45" rx="1.5" fill="#fff" stroke="#787878" stroke-width="1.1"/>
<text x="257.9" y="478.3" text-anchor="middle" class="lt">Oct 30 50k Start</text>
<rect x="227.4" y="506.65" width="71.6" height="11.55" rx="1.5" fill="#fff" stroke="#787878" stroke-width="1.1"/>
<text x="263.2" y="514.65" text-anchor="middle" class="lt">Oct 31 50&amp;80k Start Martha</text>
</g>
<polygon points="500.4,20.6 506.8,21.5 502.4,28.8" fill="#fff" stroke="#5d3f8a" stroke-width=".55" stroke-linejoin="round"/>
<polygon points="345.8,170.2 349,171.6 346.5,177" fill="#fff" stroke="#7d3f8a" stroke-width=".55" stroke-linejoin="round"/>
<polygon points="311,222.8 314.8,219.4 314.2,224.8" fill="#f4eef6" stroke="#7d3f8a" stroke-width=".55" stroke-linejoin="round"/>
<polygon points="432.8,101.8 429.8,103.6 433,104.8" fill="#efe6f2" stroke="#7d3f8a" stroke-width=".5" stroke-linejoin="round"/>
<polygon points="270.9,325.8 275.2,325.3 273.3,331.2" fill="#fff" stroke="#7d3f8a" stroke-width=".55" stroke-linejoin="round"/>
<rect x="498.9" y="6" width="11.1" height="10.9" rx="1.8" fill="#cf3b25"/>
<text x="469.2" y="92.9" font-size="5.5" font-weight="bold" fill="#111" text-anchor="middle" stroke="#fff" stroke-width=".35" paint-order="stroke">1346</text>
<text x="361" y="198.8" font-size="6.05" font-weight="bold" fill="#111" text-anchor="middle" stroke="#fff" stroke-width=".35" paint-order="stroke">2378</text>
<text x="292.6" y="300.2" font-size="6.05" font-weight="bold" fill="#111" text-anchor="middle" stroke="#fff" stroke-width=".35" paint-order="stroke">2384</text>
<text x="259.5" y="459.8" font-size="6.05" font-weight="bold" fill="#111" text-anchor="middle" stroke="#fff" stroke-width=".35" paint-order="stroke">2432</text>
<g transform="translate(500.4 54.7)"><rect x="-5.55" y="-5.55" width="11.1" height="11.1" rx="1.9" fill="#2ecc71"/><g transform="scale(.82)" fill="none" stroke-linecap="round" stroke-linejoin="round"><g stroke="#16633a" stroke-width="1.2" opacity=".8" transform="translate(-.5 .35)"><path d="M-2.2 -1.2 L0 -1.9 L1.6 -0.6 L3 -0.9 M0 -1.9 L-0.6 1 L1.2 2 L0.6 4 M-0.6 1 L-1.6 2.6 L-3.4 2.8"/></g><g stroke="#fff" stroke-width="1"><circle cx="1.1" cy="-3.1" r=".85" fill="#fff" stroke="none"/><path d="M-2.2 -1.2 L0 -1.9 L1.6 -0.6 L3 -0.9 M0 -1.9 L-0.6 1 L1.2 2 L0.6 4 M-0.6 1 L-1.6 2.6 L-3.4 2.8"/></g></g></g>
<g transform="translate(494.5 69.5)"><rect x="-5.55" y="-5.55" width="11.1" height="11.1" rx="1.9" fill="#2ecc71"/><g transform="scale(.82)" fill="none" stroke-linecap="round" stroke-linejoin="round"><g stroke="#16633a" stroke-width="1.2" opacity=".8" transform="translate(-.5 .35)"><path d="M-2.2 -1.2 L0 -1.9 L1.6 -0.6 L3 -0.9 M0 -1.9 L-0.6 1 L1.2 2 L0.6 4 M-0.6 1 L-1.6 2.6 L-3.4 2.8"/></g><g stroke="#fff" stroke-width="1"><circle cx="1.1" cy="-3.1" r=".85" fill="#fff" stroke="none"/><path d="M-2.2 -1.2 L0 -1.9 L1.6 -0.6 L3 -0.9 M0 -1.9 L-0.6 1 L1.2 2 L0.6 4 M-0.6 1 L-1.6 2.6 L-3.4 2.8"/></g></g></g>
<g transform="translate(460.4 93.4)"><rect x="-5.55" y="-5.55" width="11.1" height="11.1" rx="1.9" fill="#2ecc71"/><g transform="scale(.82)" fill="none" stroke-linecap="round" stroke-linejoin="round"><g stroke="#16633a" stroke-width="1.2" opacity=".8" transform="translate(-.5 .35)"><path d="M-2.2 -1.2 L0 -1.9 L1.6 -0.6 L3 -0.9 M0 -1.9 L-0.6 1 L1.2 2 L0.6 4 M-0.6 1 L-1.6 2.6 L-3.4 2.8"/></g><g stroke="#fff" stroke-width="1"><circle cx="1.1" cy="-3.1" r=".85" fill="#fff" stroke="none"/><path d="M-2.2 -1.2 L0 -1.9 L1.6 -0.6 L3 -0.9 M0 -1.9 L-0.6 1 L1.2 2 L0.6 4 M-0.6 1 L-1.6 2.6 L-3.4 2.8"/></g></g></g>
<g transform="translate(438.2 102.2)"><rect x="-5.55" y="-5.55" width="11.1" height="11.1" rx="1.9" fill="#2ecc71"/><g transform="scale(.82)" fill="none" stroke-linecap="round" stroke-linejoin="round"><g stroke="#16633a" stroke-width="1.2" opacity=".8" transform="translate(-.5 .35)"><path d="M-2.2 -1.2 L0 -1.9 L1.6 -0.6 L3 -0.9 M0 -1.9 L-0.6 1 L1.2 2 L0.6 4 M-0.6 1 L-1.6 2.6 L-3.4 2.8"/></g><g stroke="#fff" stroke-width="1"><circle cx="1.1" cy="-3.1" r=".85" fill="#fff" stroke="none"/><path d="M-2.2 -1.2 L0 -1.9 L1.6 -0.6 L3 -0.9 M0 -1.9 L-0.6 1 L1.2 2 L0.6 4 M-0.6 1 L-1.6 2.6 L-3.4 2.8"/></g></g></g>
<g transform="translate(400.5 121.1)"><rect x="-5.55" y="-5.55" width="11.1" height="11.1" rx="1.9" fill="#2ecc71"/><g transform="scale(.82)" fill="none" stroke-linecap="round" stroke-linejoin="round"><g stroke="#16633a" stroke-width="1.2" opacity=".8" transform="translate(-.5 .35)"><path d="M-2.2 -1.2 L0 -1.9 L1.6 -0.6 L3 -0.9 M0 -1.9 L-0.6 1 L1.2 2 L0.6 4 M-0.6 1 L-1.6 2.6 L-3.4 2.8"/></g><g stroke="#fff" stroke-width="1"><circle cx="1.1" cy="-3.1" r=".85" fill="#fff" stroke="none"/><path d="M-2.2 -1.2 L0 -1.9 L1.6 -0.6 L3 -0.9 M0 -1.9 L-0.6 1 L1.2 2 L0.6 4 M-0.6 1 L-1.6 2.6 L-3.4 2.8"/></g></g></g>
<g transform="translate(390.5 143.5)"><rect x="-5.55" y="-5.55" width="11.1" height="11.1" rx="1.9" fill="#2ecc71"/><g transform="scale(.82)" fill="none" stroke-linecap="round" stroke-linejoin="round"><g stroke="#16633a" stroke-width="1.2" opacity=".8" transform="translate(-.5 .35)"><path d="M-2.2 -1.2 L0 -1.9 L1.6 -0.6 L3 -0.9 M0 -1.9 L-0.6 1 L1.2 2 L0.6 4 M-0.6 1 L-1.6 2.6 L-3.4 2.8"/></g><g stroke="#fff" stroke-width="1"><circle cx="1.1" cy="-3.1" r=".85" fill="#fff" stroke="none"/><path d="M-2.2 -1.2 L0 -1.9 L1.6 -0.6 L3 -0.9 M0 -1.9 L-0.6 1 L1.2 2 L0.6 4 M-0.6 1 L-1.6 2.6 L-3.4 2.8"/></g></g></g>
<g transform="translate(355.4 167.2)"><rect x="-5.55" y="-5.55" width="11.1" height="11.1" rx="1.9" fill="#2ecc71"/><g transform="scale(.82)" fill="none" stroke-linecap="round" stroke-linejoin="round"><g stroke="#16633a" stroke-width="1.2" opacity=".8" transform="translate(-.5 .35)"><path d="M-2.2 -1.2 L0 -1.9 L1.6 -0.6 L3 -0.9 M0 -1.9 L-0.6 1 L1.2 2 L0.6 4 M-0.6 1 L-1.6 2.6 L-3.4 2.8"/></g><g stroke="#fff" stroke-width="1"><circle cx="1.1" cy="-3.1" r=".85" fill="#fff" stroke="none"/><path d="M-2.2 -1.2 L0 -1.9 L1.6 -0.6 L3 -0.9 M0 -1.9 L-0.6 1 L1.2 2 L0.6 4 M-0.6 1 L-1.6 2.6 L-3.4 2.8"/></g></g></g>
<g transform="translate(353.4 189.1)"><rect x="-5.55" y="-5.55" width="11.1" height="11.1" rx="1.9" fill="#2ecc71"/><g transform="scale(.82)" fill="none" stroke-linecap="round" stroke-linejoin="round"><g stroke="#16633a" stroke-width="1.2" opacity=".8" transform="translate(-.5 .35)"><path d="M-2.2 -1.2 L0 -1.9 L1.6 -0.6 L3 -0.9 M0 -1.9 L-0.6 1 L1.2 2 L0.6 4 M-0.6 1 L-1.6 2.6 L-3.4 2.8"/></g><g stroke="#fff" stroke-width="1"><circle cx="1.1" cy="-3.1" r=".85" fill="#fff" stroke="none"/><path d="M-2.2 -1.2 L0 -1.9 L1.6 -0.6 L3 -0.9 M0 -1.9 L-0.6 1 L1.2 2 L0.6 4 M-0.6 1 L-1.6 2.6 L-3.4 2.8"/></g></g></g>
<g transform="translate(356.7 215.4)"><rect x="-5.55" y="-5.55" width="11.1" height="11.1" rx="1.9" fill="#f1c40f"/><g transform="scale(.82)" fill="none" stroke-linecap="round" stroke-linejoin="round"><g stroke="#fff6c8" stroke-width="1.2" opacity=".0" transform="translate(-.5 .35)"><path d="M-2.2 -1.2 L0 -1.9 L1.6 -0.6 L3 -0.9 M0 -1.9 L-0.6 1 L1.2 2 L0.6 4 M-0.6 1 L-1.6 2.6 L-3.4 2.8"/></g><g stroke="#1d1d2a" stroke-width="1"><circle cx="1.1" cy="-3.1" r=".85" fill="#1d1d2a" stroke="none"/><path d="M-2.2 -1.2 L0 -1.9 L1.6 -0.6 L3 -0.9 M0 -1.9 L-0.6 1 L1.2 2 L0.6 4 M-0.6 1 L-1.6 2.6 L-3.4 2.8"/></g></g></g>
<g transform="translate(336.8 216.3)"><rect x="-5.55" y="-5.55" width="11.1" height="11.1" rx="1.9" fill="#f1c40f"/><g transform="scale(.82)" fill="none" stroke-linecap="round" stroke-linejoin="round"><g stroke="#fff6c8" stroke-width="1.2" opacity=".0" transform="translate(-.5 .35)"><path d="M-2.2 -1.2 L0 -1.9 L1.6 -0.6 L3 -0.9 M0 -1.9 L-0.6 1 L1.2 2 L0.6 4 M-0.6 1 L-1.6 2.6 L-3.4 2.8"/></g><g stroke="#1d1d2a" stroke-width="1"><circle cx="1.1" cy="-3.1" r=".85" fill="#1d1d2a" stroke="none"/><path d="M-2.2 -1.2 L0 -1.9 L1.6 -0.6 L3 -0.9 M0 -1.9 L-0.6 1 L1.2 2 L0.6 4 M-0.6 1 L-1.6 2.6 L-3.4 2.8"/></g></g></g>
<g transform="translate(304.5 226.1)"><rect x="-5.55" y="-5.55" width="11.1" height="11.1" rx="1.9" fill="#2ecc71"/><g transform="scale(.82)" fill="none" stroke-linecap="round" stroke-linejoin="round"><g stroke="#16633a" stroke-width="1.2" opacity=".8" transform="translate(-.5 .35)"><path d="M-2.2 -1.2 L0 -1.9 L1.6 -0.6 L3 -0.9 M0 -1.9 L-0.6 1 L1.2 2 L0.6 4 M-0.6 1 L-1.6 2.6 L-3.4 2.8"/></g><g stroke="#fff" stroke-width="1"><circle cx="1.1" cy="-3.1" r=".85" fill="#fff" stroke="none"/><path d="M-2.2 -1.2 L0 -1.9 L1.6 -0.6 L3 -0.9 M0 -1.9 L-0.6 1 L1.2 2 L0.6 4 M-0.6 1 L-1.6 2.6 L-3.4 2.8"/></g></g></g>
<g transform="translate(299 248.5)"><rect x="-5.55" y="-5.55" width="11.1" height="11.1" rx="1.9" fill="#2ecc71"/><g transform="scale(.82)" fill="none" stroke-linecap="round" stroke-linejoin="round"><g stroke="#16633a" stroke-width="1.2" opacity=".8" transform="translate(-.5 .35)"><path d="M-2.2 -1.2 L0 -1.9 L1.6 -0.6 L3 -0.9 M0 -1.9 L-0.6 1 L1.2 2 L0.6 4 M-0.6 1 L-1.6 2.6 L-3.4 2.8"/></g><g stroke="#fff" stroke-width="1"><circle cx="1.1" cy="-3.1" r=".85" fill="#fff" stroke="none"/><path d="M-2.2 -1.2 L0 -1.9 L1.6 -0.6 L3 -0.9 M0 -1.9 L-0.6 1 L1.2 2 L0.6 4 M-0.6 1 L-1.6 2.6 L-3.4 2.8"/></g></g></g>
<g transform="translate(293.2 291.1)"><rect x="-5.55" y="-5.55" width="11.1" height="11.1" rx="1.9" fill="#2ecc71"/><g transform="scale(.82)" fill="none" stroke-linecap="round" stroke-linejoin="round"><g stroke="#16633a" stroke-width="1.2" opacity=".8" transform="translate(-.5 .35)"><path d="M-2.2 -1.2 L0 -1.9 L1.6 -0.6 L3 -0.9 M0 -1.9 L-0.6 1 L1.2 2 L0.6 4 M-0.6 1 L-1.6 2.6 L-3.4 2.8"/></g><g stroke="#fff" stroke-width="1"><circle cx="1.1" cy="-3.1" r=".85" fill="#fff" stroke="none"/><path d="M-2.2 -1.2 L0 -1.9 L1.6 -0.6 L3 -0.9 M0 -1.9 L-0.6 1 L1.2 2 L0.6 4 M-0.6 1 L-1.6 2.6 L-3.4 2.8"/></g></g></g>
<g transform="translate(279.4 312.5)"><rect x="-5.55" y="-5.55" width="11.1" height="11.1" rx="1.9" fill="#2ecc71"/><g transform="scale(.82)" fill="none" stroke-linecap="round" stroke-linejoin="round"><g stroke="#16633a" stroke-width="1.2" opacity=".8" transform="translate(-.5 .35)"><path d="M-2.2 -1.2 L0 -1.9 L1.6 -0.6 L3 -0.9 M0 -1.9 L-0.6 1 L1.2 2 L0.6 4 M-0.6 1 L-1.6 2.6 L-3.4 2.8"/></g><g stroke="#fff" stroke-width="1"><circle cx="1.1" cy="-3.1" r=".85" fill="#fff" stroke="none"/><path d="M-2.2 -1.2 L0 -1.9 L1.6 -0.6 L3 -0.9 M0 -1.9 L-0.6 1 L1.2 2 L0.6 4 M-0.6 1 L-1.6 2.6 L-3.4 2.8"/></g></g></g>
<g transform="translate(278.7 355.4)"><rect x="-5.55" y="-5.55" width="11.1" height="11.1" rx="1.9" fill="#2ecc71"/><g transform="scale(.82)" fill="none" stroke-linecap="round" stroke-linejoin="round"><g stroke="#16633a" stroke-width="1.2" opacity=".8" transform="translate(-.5 .35)"><path d="M-2.2 -1.2 L0 -1.9 L1.6 -0.6 L3 -0.9 M0 -1.9 L-0.6 1 L1.2 2 L0.6 4 M-0.6 1 L-1.6 2.6 L-3.4 2.8"/></g><g stroke="#fff" stroke-width="1"><circle cx="1.1" cy="-3.1" r=".85" fill="#fff" stroke="none"/><path d="M-2.2 -1.2 L0 -1.9 L1.6 -0.6 L3 -0.9 M0 -1.9 L-0.6 1 L1.2 2 L0.6 4 M-0.6 1 L-1.6 2.6 L-3.4 2.8"/></g></g></g>
<g transform="translate(285.8 380.6)"><rect x="-5.55" y="-5.55" width="11.1" height="11.1" rx="1.9" fill="#2ecc71"/><g transform="scale(.82)" fill="none" stroke-linecap="round" stroke-linejoin="round"><g stroke="#16633a" stroke-width="1.2" opacity=".8" transform="translate(-.5 .35)"><path d="M-2.2 -1.2 L0 -1.9 L1.6 -0.6 L3 -0.9 M0 -1.9 L-0.6 1 L1.2 2 L0.6 4 M-0.6 1 L-1.6 2.6 L-3.4 2.8"/></g><g stroke="#fff" stroke-width="1"><circle cx="1.1" cy="-3.1" r=".85" fill="#fff" stroke="none"/><path d="M-2.2 -1.2 L0 -1.9 L1.6 -0.6 L3 -0.9 M0 -1.9 L-0.6 1 L1.2 2 L0.6 4 M-0.6 1 L-1.6 2.6 L-3.4 2.8"/></g></g></g>
<g transform="translate(285.4 423.7)"><rect x="-5.55" y="-5.55" width="11.1" height="11.1" rx="1.9" fill="#2ecc71"/><g transform="scale(.82)" fill="none" stroke-linecap="round" stroke-linejoin="round"><g stroke="#16633a" stroke-width="1.2" opacity=".8" transform="translate(-.5 .35)"><path d="M-2.2 -1.2 L0 -1.9 L1.6 -0.6 L3 -0.9 M0 -1.9 L-0.6 1 L1.2 2 L0.6 4 M-0.6 1 L-1.6 2.6 L-3.4 2.8"/></g><g stroke="#fff" stroke-width="1"><circle cx="1.1" cy="-3.1" r=".85" fill="#fff" stroke="none"/><path d="M-2.2 -1.2 L0 -1.9 L1.6 -0.6 L3 -0.9 M0 -1.9 L-0.6 1 L1.2 2 L0.6 4 M-0.6 1 L-1.6 2.6 L-3.4 2.8"/></g></g></g>
<g transform="translate(270.4 443.3)"><rect x="-5.55" y="-5.55" width="11.1" height="11.1" rx="1.9" fill="#2ecc71"/><g transform="scale(.82)" fill="none" stroke-linecap="round" stroke-linejoin="round"><g stroke="#16633a" stroke-width="1.2" opacity=".8" transform="translate(-.5 .35)"><path d="M-2.2 -1.2 L0 -1.9 L1.6 -0.6 L3 -0.9 M0 -1.9 L-0.6 1 L1.2 2 L0.6 4 M-0.6 1 L-1.6 2.6 L-3.4 2.8"/></g><g stroke="#fff" stroke-width="1"><circle cx="1.1" cy="-3.1" r=".85" fill="#fff" stroke="none"/><path d="M-2.2 -1.2 L0 -1.9 L1.6 -0.6 L3 -0.9 M0 -1.9 L-0.6 1 L1.2 2 L0.6 4 M-0.6 1 L-1.6 2.6 L-3.4 2.8"/></g></g></g>
<g transform="translate(244.2 473.3)"><rect x="-5.55" y="-5.55" width="11.1" height="11.1" rx="1.9" fill="#2ecc71"/><g transform="scale(.82)" fill="none" stroke-linecap="round" stroke-linejoin="round"><g stroke="#16633a" stroke-width="1.2" opacity=".8" transform="translate(-.5 .35)"><path d="M-2.2 -1.2 L0 -1.9 L1.6 -0.6 L3 -0.9 M0 -1.9 L-0.6 1 L1.2 2 L0.6 4 M-0.6 1 L-1.6 2.6 L-3.4 2.8"/></g><g stroke="#fff" stroke-width="1"><circle cx="1.1" cy="-3.1" r=".85" fill="#fff" stroke="none"/><path d="M-2.2 -1.2 L0 -1.9 L1.6 -0.6 L3 -0.9 M0 -1.9 L-0.6 1 L1.2 2 L0.6 4 M-0.6 1 L-1.6 2.6 L-3.4 2.8"/></g></g></g>
<g transform="translate(258.5 495.2)"><rect x="-5.55" y="-5.55" width="11.1" height="11.1" rx="1.9" fill="#2ecc71"/><g transform="scale(.82)" fill="none" stroke-linecap="round" stroke-linejoin="round"><g stroke="#16633a" stroke-width="1.2" opacity=".8" transform="translate(-.5 .35)"><path d="M-2.2 -1.2 L0 -1.9 L1.6 -0.6 L3 -0.9 M0 -1.9 L-0.6 1 L1.2 2 L0.6 4 M-0.6 1 L-1.6 2.6 L-3.4 2.8"/></g><g stroke="#fff" stroke-width="1"><circle cx="1.1" cy="-3.1" r=".85" fill="#fff" stroke="none"/><path d="M-2.2 -1.2 L0 -1.9 L1.6 -0.6 L3 -0.9 M0 -1.9 L-0.6 1 L1.2 2 L0.6 4 M-0.6 1 L-1.6 2.6 L-3.4 2.8"/></g></g></g>
</svg>
<div class="btn" style="left:5.2px;top:4.8px;width:13.9px;height:12.9px;"></div>
<div class="btn" style="left:5.2px;top:18.9px;width:13.9px;height:13px;"></div>
<div class="btn" style="left:5.3px;top:37.8px;width:13.9px;height:13.1px;"></div>
<div class="btn" style="left:5.3px;top:56px;width:13.9px;height:12.8px;"></div>
<div class="btn" style="left:578.1px;top:4.9px;width:13px;height:13px;"></div>
<div class="btn" style="left:599.7px;top:5px;width:51.5px;height:13px;"></div>
<svg width="673" height="538" viewBox="0 0 673 538">
<g stroke="#111" stroke-width="1.4"><path d="M15.1 25.4 H20.9 M18 22.5 V28.3 M15.3 39.7 H20.7"/></g>
<g fill="none" stroke="#555" stroke-width=".7"><circle cx="18.2" cy="58.2" r="2.4"/><path d="M12.6 61.4 L15.4 59.6 M20.6 56.2 L23.6 53.8 M20.4 60.4 L22.8 62.8"/><path d="M17.2 59.2 V57.2 L18.2 58.4 L19.2 57.2 V59.2" stroke-width=".5"/></g>
<g fill="none" stroke="#333" stroke-width=".8"><path d="M14.3 72.9 C14.6 75.6 15 77.2 16.4 78.4 C17.8 79.4 19 79.4 20.3 80.4"/><circle cx="14.2" cy="72.6" r=".5" fill="#333"/><path d="M20.7 81.2 L19.6 78 A1.3 1.3 0 1 1 21.8 78 Z"/></g>
<circle cx="590.3" cy="25.5" r="3.7" fill="none" stroke="#222" stroke-width=".9"/><path d="M590.6 23.4 L590.1 26" stroke="#222" stroke-width=".8" fill="none"/>
<text x="614.3" y="27.9" font-size="6.3" font-weight="bold" fill="#444" textLength="24.8" lengthAdjust="spacingAndGlyphs">STREET MAP</text>
<path d="M650.7 25 L654.4 25 L652.55 27 Z" fill="#333"/>
</svg>
<div id="attr">Map Data © <b>OpenStreetMap Contributors</b></div>
</div>
<div id="bar"></div><div id="bar2"></div><div id="knob"></div>
<div id="bot">
<svg style="position:absolute;left:0;top:0" width="673" height="17" viewBox="0 521 673 17">
<path d="M4 525.8 L4 533.6 L10 529.7 Z" fill="#e4e4e4"/>
<path d="M20.9 532.2 A3.5 3.5 0 1 1 27.1 532.2 Z" fill="#555" stroke="#d8d8d8" stroke-width="1.2" stroke-linejoin="round"/><path d="M24 532 L25.4 528.6" stroke="#eee" stroke-width=".9"/>
<g font-family="Liberation Sans, sans-serif" font-size="8.6"><text x="600.1" y="532.1" fill="#8f8f8f" textLength="19.7" lengthAdjust="spacingAndGlyphs">plota</text><text x="620.4" y="532.1" fill="#c8642a" textLength="21.2" lengthAdjust="spacingAndGlyphs">route</text><text x="642.4" y="532.1" fill="#b5b5b5" textLength="20.8" lengthAdjust="spacingAndGlyphs">.com</text></g>
<rect x="594.4" y="532.5" width="74.2" height=".6" fill="#8a8a8a"/>
<g fill="#e8742c"><circle cx="595" cy="526.9" r="2.3"/><path d="M594.4 528 L595.6 528 L595.2 533 L594.8 533 Z"/><circle cx="667.4" cy="526.9" r="2.3"/><path d="M666.8 528 L668 528 L667.6 533 L667.2 533 Z"/></g>
<circle cx="595" cy="526.7" r=".8" fill="#fff"/><circle cx="667.4" cy="526.7" r=".8" fill="#fff"/>
<circle cx="609.5" cy="529.7" r=".8" fill="#e8742c"/>
</svg>
<span style="left:35px;top:4.7px;line-height:8px;">2709.50 / 2709.50</span>
<span style="left:94px;top:4.7px;line-height:8px;font-size:6px;">km</span>
<span style="left:104.8px;top:4.4px;line-height:8.6px;height:8.6px;font-size:6.3px;background:#505050;color:#b4b4b4;padding:0 1.5px;border-radius:1px;">miles</span>
</div>
</div>
</body></html>
